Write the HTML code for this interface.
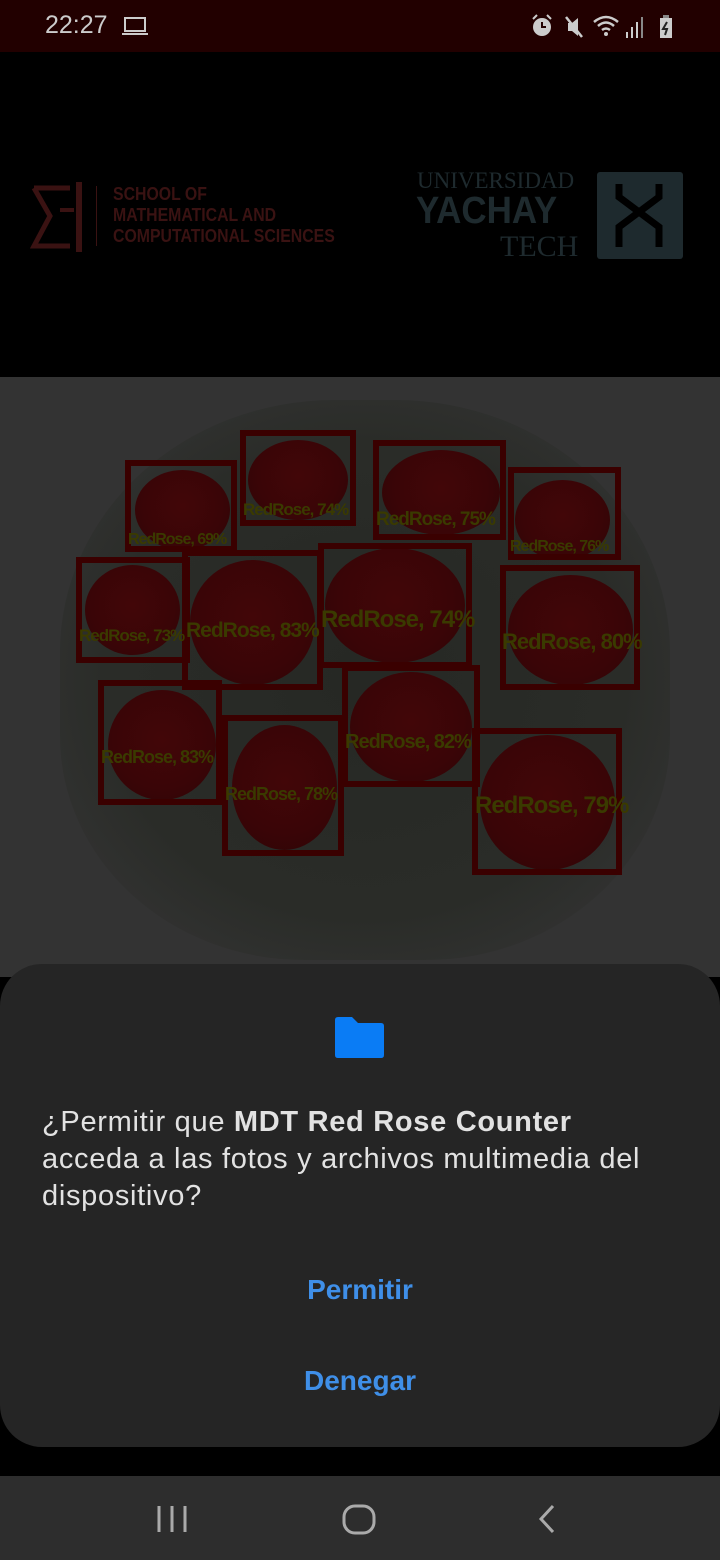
<!DOCTYPE html>
<html><head><meta charset="utf-8"><style>
*{margin:0;padding:0;box-sizing:border-box}
body{width:720px;height:1560px;background:#000;position:relative;overflow:hidden;font-family:"Liberation Sans",sans-serif}
.abs{position:absolute}
.box{position:absolute;border:6px solid #3a0000}
.lbl{position:absolute;color:#3a3a00;font-weight:bold;white-space:nowrap;letter-spacing:-1px}
.rose{position:absolute;border-radius:50%;background:radial-gradient(circle at 50% 45%,#420608 0%,#3a0507 60%,#2e0506 100%)}
</style></head><body>
<div class="abs" style="left:0;top:0;width:720px;height:52px;background:#220000"></div>
<div class="abs" style="left:45px;top:11px;color:#ccc;font-size:25px">22:27</div>
<svg class="abs" style="left:122px;top:16px" width="26" height="22"><rect x="3" y="2" width="20" height="13" fill="none" stroke="#ccc" stroke-width="2"/><rect x="0" y="17" width="26" height="2" fill="#ccc"/></svg>
<svg class="abs" style="left:530px;top:14px" width="60" height="26"><circle cx="12" cy="13" r="9" fill="#ccc"/><path d="M12 8 V13 H16" stroke="#220000" stroke-width="2" fill="none"/><path d="M3 5 L7 1 M21 5 L17 1" stroke="#ccc" stroke-width="2"/><path d="M38 9 H42 L48 4 V22 L42 17 H38Z" fill="#ccc"/><path d="M36 3 L52 23" stroke="#ccc" stroke-width="2.5"/></svg>
<svg class="abs" style="left:592px;top:14px" width="90" height="26"><path d="M2 8 Q14 -2 26 8 M6 12 Q14 5 22 12 M10 16 Q14 13 18 16" stroke="#ccc" stroke-width="2.5" fill="none"/><circle cx="14" cy="20" r="2" fill="#ccc"/><rect x="34" y="18" width="2" height="6" fill="#ccc"/><rect x="39" y="13" width="2" height="11" fill="#ccc"/><rect x="44" y="8" width="2" height="16" fill="#ccc"/><rect x="49" y="3" width="2" height="21" fill="#888"/><rect x="68" y="4" width="12" height="20" fill="#ccc"/><rect x="71" y="1" width="6" height="3" fill="#888"/><path d="M75 8 L71 15 L75 15 L73 21" stroke="#222" stroke-width="2" fill="none"/></svg>

<!-- logos -->
<svg class="abs" style="left:30px;top:180px" width="60" height="75"><path d="M4 8 L40 8 M4 8 L20 36 L4 66 L40 66" stroke="#3a1212" stroke-width="5" fill="none"/><rect x="46" y="2" width="6" height="70" fill="#3a1212"/><rect x="30" y="28" width="14" height="4" fill="#3a1212"/></svg>
<div class="abs" style="left:96px;top:186px;width:1px;height:60px;background:#3a1212"></div>
<div class="abs" style="left:113px;top:184px;color:#3a1212;font-size:18px;font-weight:bold;line-height:21px;transform:scaleX(.88);transform-origin:left">SCHOOL OF<br>MATHEMATICAL AND<br>COMPUTATIONAL SCIENCES</div>
<div class="abs" style="left:417px;top:168px;color:#1e2a2e;font-family:'Liberation Serif',serif;font-size:23px">UNIVERSIDAD</div>
<div class="abs" style="left:416px;top:190px;color:#1e2a2e;font-family:'Liberation Sans',sans-serif;font-weight:bold;font-size:38px;transform:scaleX(.92);transform-origin:left">YACHAY</div>
<div class="abs" style="left:500px;top:230px;color:#1e2a2e;font-family:'Liberation Serif',serif;font-size:30px">TECH</div>
<div class="abs" style="left:597px;top:172px;width:86px;height:87px;background:#1e2a2e;border-radius:3px"></div>
<svg class="abs" style="left:597px;top:172px" width="86" height="87"><path d="M22 12 L22 25 L62 55 L62 75 M62 12 L62 25 L22 55 L22 75" stroke="#000" stroke-width="7" fill="none"/></svg>

<!-- image -->
<div class="abs" style="left:0;top:377px;width:720px;height:600px;background:#333"></div>
<div class="abs" style="left:60px;top:400px;width:610px;height:560px;border-radius:45% 45% 40% 40%;background:radial-gradient(ellipse at 50% 50%,#262824 0%,#2a2c28 60%,#333 85%)"></div>
<div class="rose" style="left:135px;top:470px;width:95px;height:80px"></div>
<div class="rose" style="left:248px;top:440px;width:100px;height:80px"></div>
<div class="rose" style="left:382px;top:450px;width:118px;height:85px"></div>
<div class="rose" style="left:515px;top:480px;width:95px;height:80px"></div>
<div class="rose" style="left:85px;top:565px;width:95px;height:90px"></div>
<div class="rose" style="left:190px;top:560px;width:125px;height:125px"></div>
<div class="rose" style="left:325px;top:548px;width:140px;height:115px"></div>
<div class="rose" style="left:508px;top:575px;width:125px;height:110px"></div>
<div class="rose" style="left:108px;top:690px;width:108px;height:110px"></div>
<div class="rose" style="left:232px;top:725px;width:105px;height:125px"></div>
<div class="rose" style="left:350px;top:672px;width:122px;height:110px"></div>
<div class="rose" style="left:480px;top:735px;width:135px;height:135px"></div>

<div class="box" style="left:125px;top:460px;width:112px;height:92px"></div>
<div class="box" style="left:240px;top:430px;width:116px;height:96px"></div>
<div class="box" style="left:373px;top:440px;width:133px;height:100px"></div>
<div class="box" style="left:508px;top:467px;width:113px;height:93px"></div>
<div class="box" style="left:76px;top:557px;width:114px;height:106px"></div>
<div class="box" style="left:182px;top:550px;width:141px;height:140px"></div>
<div class="box" style="left:318px;top:543px;width:154px;height:125px"></div>
<div class="box" style="left:500px;top:565px;width:140px;height:125px"></div>
<div class="box" style="left:98px;top:680px;width:124px;height:125px"></div>
<div class="box" style="left:222px;top:715px;width:122px;height:141px"></div>
<div class="box" style="left:342px;top:665px;width:138px;height:122px"></div>
<div class="box" style="left:472px;top:728px;width:150px;height:147px"></div>

<div class="lbl" style="left:128px;top:531px;font-size:16px">RedRose, 69%</div>
<div class="lbl" style="left:243px;top:500px;font-size:17px">RedRose, 74%</div>
<div class="lbl" style="left:376px;top:509px;font-size:19px">RedRose, 75%</div>
<div class="lbl" style="left:510px;top:538px;font-size:16px">RedRose, 76%</div>
<div class="lbl" style="left:79px;top:626px;font-size:17px">RedRose, 73%</div>
<div class="lbl" style="left:186px;top:619px;font-size:21px">RedRose, 83%</div>
<div class="lbl" style="left:321px;top:606px;font-size:24px">RedRose, 74%</div>
<div class="lbl" style="left:502px;top:629px;font-size:22px">RedRose, 80%</div>
<div class="lbl" style="left:101px;top:747px;font-size:18px">RedRose, 83%</div>
<div class="lbl" style="left:225px;top:784px;font-size:18px">RedRose, 78%</div>
<div class="lbl" style="left:345px;top:731px;font-size:20px">RedRose, 82%</div>
<div class="lbl" style="left:475px;top:792px;font-size:24px">RedRose, 79%</div>

<!-- dialog -->
<div class="abs" style="left:0;top:964px;width:720px;height:483px;background:#252525;border-radius:42px"></div>
<svg class="abs" style="left:335px;top:1017px" width="50" height="42"><path d="M3 0 H17 L23 6 H46 Q49 6 49 9 V38 Q49 41 46 41 H3 Q0 41 0 38 V3 Q0 0 3 0Z" fill="#0a7cf5"/></svg>
<div class="abs" style="left:42px;top:1104px;color:#e2e2e2;font-size:29px;letter-spacing:0.7px;line-height:37px;width:678px;white-space:nowrap">¿Permitir que <b>MDT Red Rose Counter</b><br>acceda a las fotos y archivos multimedia del<br>dispositivo?</div>
<div class="abs" style="left:0;top:1274px;width:720px;text-align:center;color:#3f8fe8;font-size:28px;font-weight:bold">Permitir</div>
<div class="abs" style="left:0;top:1365px;width:720px;text-align:center;color:#3f8fe8;font-size:28px;font-weight:bold">Denegar</div>

<!-- nav -->
<div class="abs" style="left:0;top:1476px;width:720px;height:84px;background:#2d2d2d"></div>
<svg class="abs" style="left:150px;top:1500px" width="420" height="40"><path d="M9 6 V32 M22 6 V32 M35 6 V32" stroke="#aaa" stroke-width="3"/><rect x="194" y="6" width="30" height="27" rx="11" fill="none" stroke="#aaa" stroke-width="3"/><path d="M403 6 L391 19 L403 32" stroke="#aaa" stroke-width="3" fill="none"/></svg>
</body></html>
